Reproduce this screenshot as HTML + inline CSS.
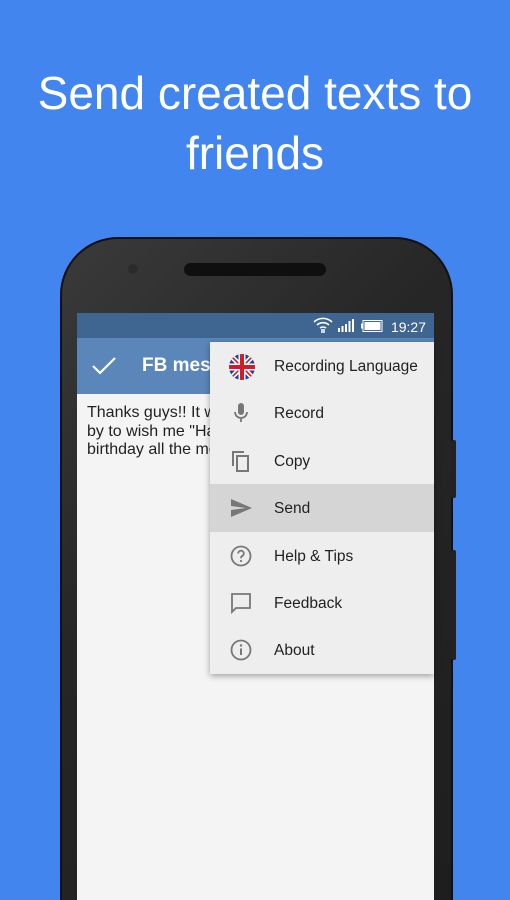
<!DOCTYPE html>
<html style="width:510px;height:900px;overflow:hidden"><head><meta charset="utf-8"><style>
*{margin:0;padding:0;box-sizing:border-box}
body{width:510px;height:900px;overflow:hidden;background:#4385ef;font-family:"Liberation Sans",sans-serif;position:relative}
h1{position:absolute;top:63px;left:0;width:510px;text-align:center;color:#fff;font-weight:normal;font-size:46px;line-height:60px;font-family:"Liberation Sans",sans-serif}
.phone{position:absolute;left:60px;top:237px;width:393px;height:663px;border-radius:58px 58px 0 0;border-bottom:none;background:linear-gradient(135deg,#3a3a3a 0%,#262626 40%,#1e1e1e 100%);border:2px solid #111;border-bottom:0}
.btn{position:absolute;left:451px;width:5px;background:#222;border-radius:2px}
.speaker{position:absolute;left:184px;top:263px;width:142px;height:13px;border-radius:7px;background:#0f0f0f}
.cam{position:absolute;left:128px;top:264px;width:10px;height:10px;border-radius:50%;background:#2b2b2b}
.screen{position:absolute;left:77px;top:313px;width:357px;height:587px;background:#f4f4f4;overflow:hidden}
.status{height:25px;background:#3f6591;color:#fff;font-size:14px;text-align:right;padding:6px 8px 0 0;position:relative}
.appbar{height:56px;background:#5a86b9;color:#fff;position:relative}
.appbar .t{position:absolute;left:65px;top:17px;font-size:19px;font-weight:bold}
.txt{padding:10px 10px;font-size:16px;line-height:18.5px;color:#222}
.menu{position:absolute;left:210px;top:342px;width:224px;height:332px;background:#eeeeee;box-shadow:0 2px 6px rgba(0,0,0,.35)}
.it{height:47.4px;position:relative;font-size:15.5px;color:#222}
.it span{position:absolute;left:64px;top:16px}
.it svg{position:absolute;left:19px;top:12px}
.sel{background:#d5d5d5}
</style></head><body>
<h1>Send created texts to<br>friends</h1>
<div class="phone"></div>
<div class="btn" style="top:440px;height:58px"></div>
<div class="btn" style="top:550px;height:110px"></div>
<div class="speaker"></div><div class="cam"></div>
<div class="screen">
 <div class="status">
  <svg width="20" height="18" viewBox="0 0 20 18" style="position:absolute;left:236px;top:3px"><path d="M1 6a13 13 0 0 1 18 0M4 9a9 9 0 0 1 12 0M7 12a5 5 0 0 1 6 0" stroke="#fff" stroke-width="1.6" fill="none"/><path d="M9 17v-4M11 13v4" stroke="#fff" stroke-width="1.5"/></svg>
  <svg width="16" height="13" style="position:absolute;left:261px;top:6px"><rect x="0" y="9" width="2" height="4" fill="#fff"/><rect x="3.5" y="7" width="2" height="6" fill="#fff"/><rect x="7" y="5" width="2" height="8" fill="#fff"/><rect x="10.5" y="2" width="2" height="11" fill="#fff"/><rect x="14" y="0" width="2" height="13" fill="#fff"/></svg>
  <svg width="22" height="12" style="position:absolute;left:284px;top:7px"><rect x="2" y="0.5" width="19" height="11" fill="none" stroke="#fff"/><rect x="0" y="3.5" width="2" height="5" fill="#fff"/><rect x="3.5" y="2" width="16" height="8" fill="#fff"/></svg>
  19:27</div>
 <div class="appbar">
  <svg width="26" height="20" style="position:absolute;left:14px;top:18px"><path d="M2 10l7 7L24 2" stroke="#fff" stroke-width="2.2" fill="none"/></svg>
  <div class="t">FB messages</div>
 </div>
 <div class="txt">Thanks guys!! It was great of you all to stop<br>by to wish me "Happy<br>birthday all the morning</div>
</div>
<div class="menu">
 <div class="it"><svg width="26" height="26" viewBox="0 0 26 26"><defs><clipPath id="c"><circle cx="13" cy="13" r="13"/></clipPath></defs><g clip-path="url(#c)"><rect width="26" height="26" fill="#233f8f"/><path d="M0 0L26 26M26 0L0 26" stroke="#fff" stroke-width="5"/><path d="M0 0L26 26M26 0L0 26" stroke="#cf1b2b" stroke-width="1.6"/><path d="M13 0v26M0 13h26" stroke="#fff" stroke-width="7"/><path d="M13 0v26M0 13h26" stroke="#cf1b2b" stroke-width="4"/></g></svg><span>Recording Language</span></div>
 <div class="it"><svg width="24" height="24" viewBox="0 0 24 24"><rect x="9" y="2" width="6" height="12" rx="3" fill="#777"/><path d="M6 11a6 6 0 0 0 12 0M12 17v4" stroke="#777" stroke-width="1.8" fill="none"/></svg><span>Record</span></div>
 <div class="it"><svg width="24" height="24" viewBox="0 0 24 24"><path d="M4 17V3h11" stroke="#777" stroke-width="2" fill="none"/><rect x="8" y="7" width="11" height="15" stroke="#777" stroke-width="2" fill="none"/></svg><span>Copy</span></div>
 <div class="it sel"><svg width="24" height="24" viewBox="0 0 24 24"><path d="M2 3l21 9L2 21v-7l15-2L2 10z" fill="#777"/></svg><span>Send</span></div>
 <div class="it"><svg width="24" height="24" viewBox="0 0 24 24"><circle cx="12" cy="12" r="9.5" stroke="#777" stroke-width="1.8" fill="none"/><path d="M9.2 9.5a2.8 2.8 0 1 1 4 2.5c-1 .5-1.2 1.2-1.2 2.3" stroke="#777" stroke-width="1.8" fill="none"/><circle cx="12" cy="17" r="1.1" fill="#777"/></svg><span>Help &amp; Tips</span></div>
 <div class="it"><svg width="24" height="24" viewBox="0 0 24 24"><path d="M3 3h18v14H7l-4 4z" stroke="#777" stroke-width="1.8" fill="none"/></svg><span>Feedback</span></div>
 <div class="it"><svg width="24" height="24" viewBox="0 0 24 24"><circle cx="12" cy="12" r="9.5" stroke="#777" stroke-width="1.8" fill="none"/><path d="M12 10.5v6.5" stroke="#777" stroke-width="2"/><circle cx="12" cy="7.5" r="1.2" fill="#777"/></svg><span>About</span></div>
</div>
</body></html>
